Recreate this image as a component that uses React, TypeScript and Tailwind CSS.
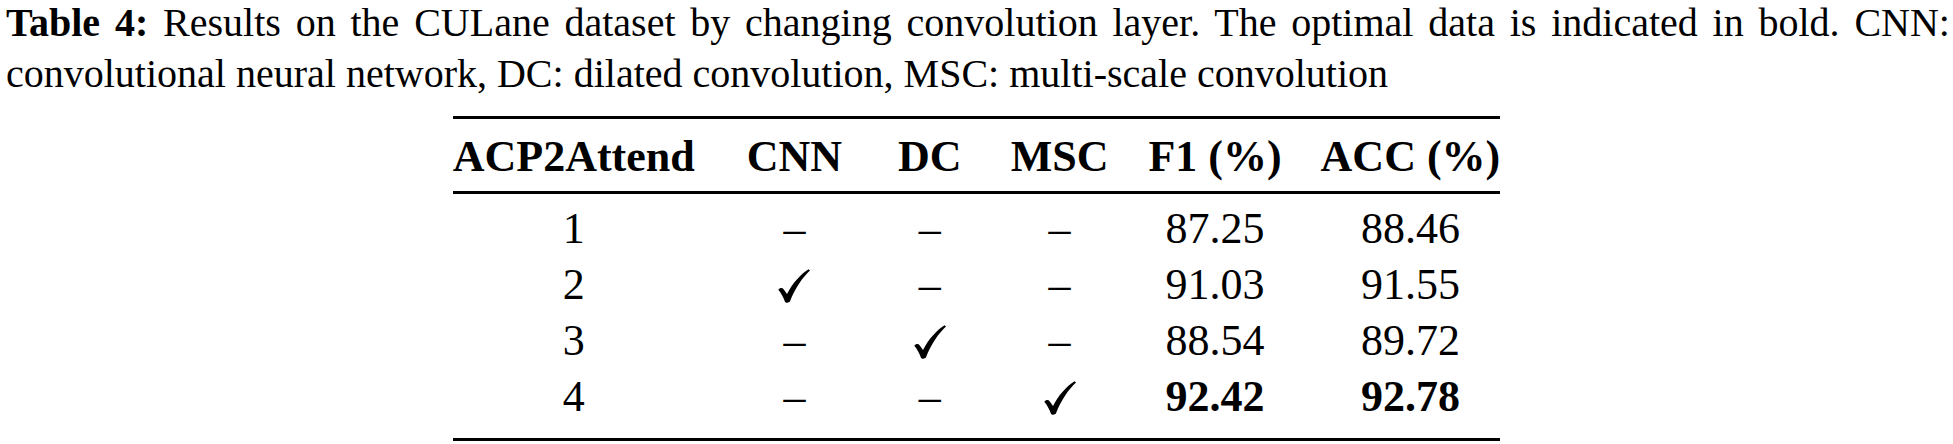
const header = ['ACP2Attend', 'CNN', 'DC', 'MSC', 'F1 (%)', 'ACC (%)'];

// per-column right padding so column centres land where the reference has them
const pad = ['pr-[52px]', 'pr-[56px]', 'pr-[49px]', 'pr-[40px]', 'pr-[39px]', 'pr-0'];

const rows = [
    { id: '1', marks: [false, false, false], f1: '87.25', acc: '88.46', best: false },
    { id: '2', marks: [true, false, false], f1: '91.03', acc: '91.55', best: false },
    { id: '3', marks: [false, true, false], f1: '88.54', acc: '89.72', best: false },
    { id: '4', marks: [false, false, true], f1: '92.42', acc: '92.78', best: true },
];

function Check() {
    return (
        <svg viewBox="0 0 32 34" className="inline-block w-[32px] h-[34px] align-[-4px]">
            <path
                d="M0.3 20.8 C1.8 18.8 4.2 18.4 5.8 20.4 L9 25 C14.5 14.5 21.5 6 30.6 0.2 L32 1.6 C24.5 8.5 17 19.5 12 32.2 C11 34 7.6 34.2 6.9 32.4 C5.3 28.2 3 24 0.3 20.8 Z"
                fill="currentColor"
            />
        </svg>
    );
}

export default function App() {
    return (
        <div className="w-full h-[444px] bg-white text-black font-['Liberation_Serif','Times_New_Roman',serif] overflow-hidden">
            {/* caption, broken where the reference breaks it */}
            <p className="pt-[3px] pl-[6px] pr-[3px] text-[40px] leading-[40px]">
                <span className="block text-justify [text-align-last:justify]">
                    <span className="font-bold">Table 4:</span> Results on the CULane dataset by changing convolution
                    layer. The optimal data is indicated in bold. CNN:
                </span>
                <span className="block mt-[11px]">
                    convolutional neural network, DC: dilated convolution, MSC: multi-scale convolution
                </span>
            </p>

            <table className="mx-auto mt-[22px] border-collapse text-[44px]">
                <thead>
                    <tr className="border-t-[3px] border-b-[3px] border-black">
                        {header.map((h, i) => (
                            <th
                                key={h}
                                className={`pl-0 ${pad[i]} pt-[13px] pb-[9px] leading-[50px] font-bold text-center whitespace-nowrap`}
                            >
                                {h}
                            </th>
                        ))}
                    </tr>
                </thead>
                <tbody>
                    {rows.map((r, ri) => {
                        const first = ri === 0;
                        const last = ri === rows.length - 1;
                        const cells = [
                            r.id,
                            ...r.marks.map((m) => (m ? <Check /> : '–')),
                            r.f1,
                            r.acc,
                        ];
                        return (
                            <tr key={r.id} className={last ? 'border-b-[3px] border-black' : ''}>
                                {cells.map((c, ci) => (
                                    <td
                                        key={ci}
                                        className={`pl-0 ${pad[ci]} ${first ? 'pt-[7px]' : 'pt-0'} ${
                                            last ? 'pb-[13px]' : 'pb-0'
                                        } leading-[56px] text-center whitespace-nowrap ${
                                            r.best && ci >= 4 ? 'font-bold' : 'font-normal'
                                        }`}
                                    >
                                        {c}
                                    </td>
                                ))}
                            </tr>
                        );
                    })}
                </tbody>
            </table>
        </div>
    );
}
